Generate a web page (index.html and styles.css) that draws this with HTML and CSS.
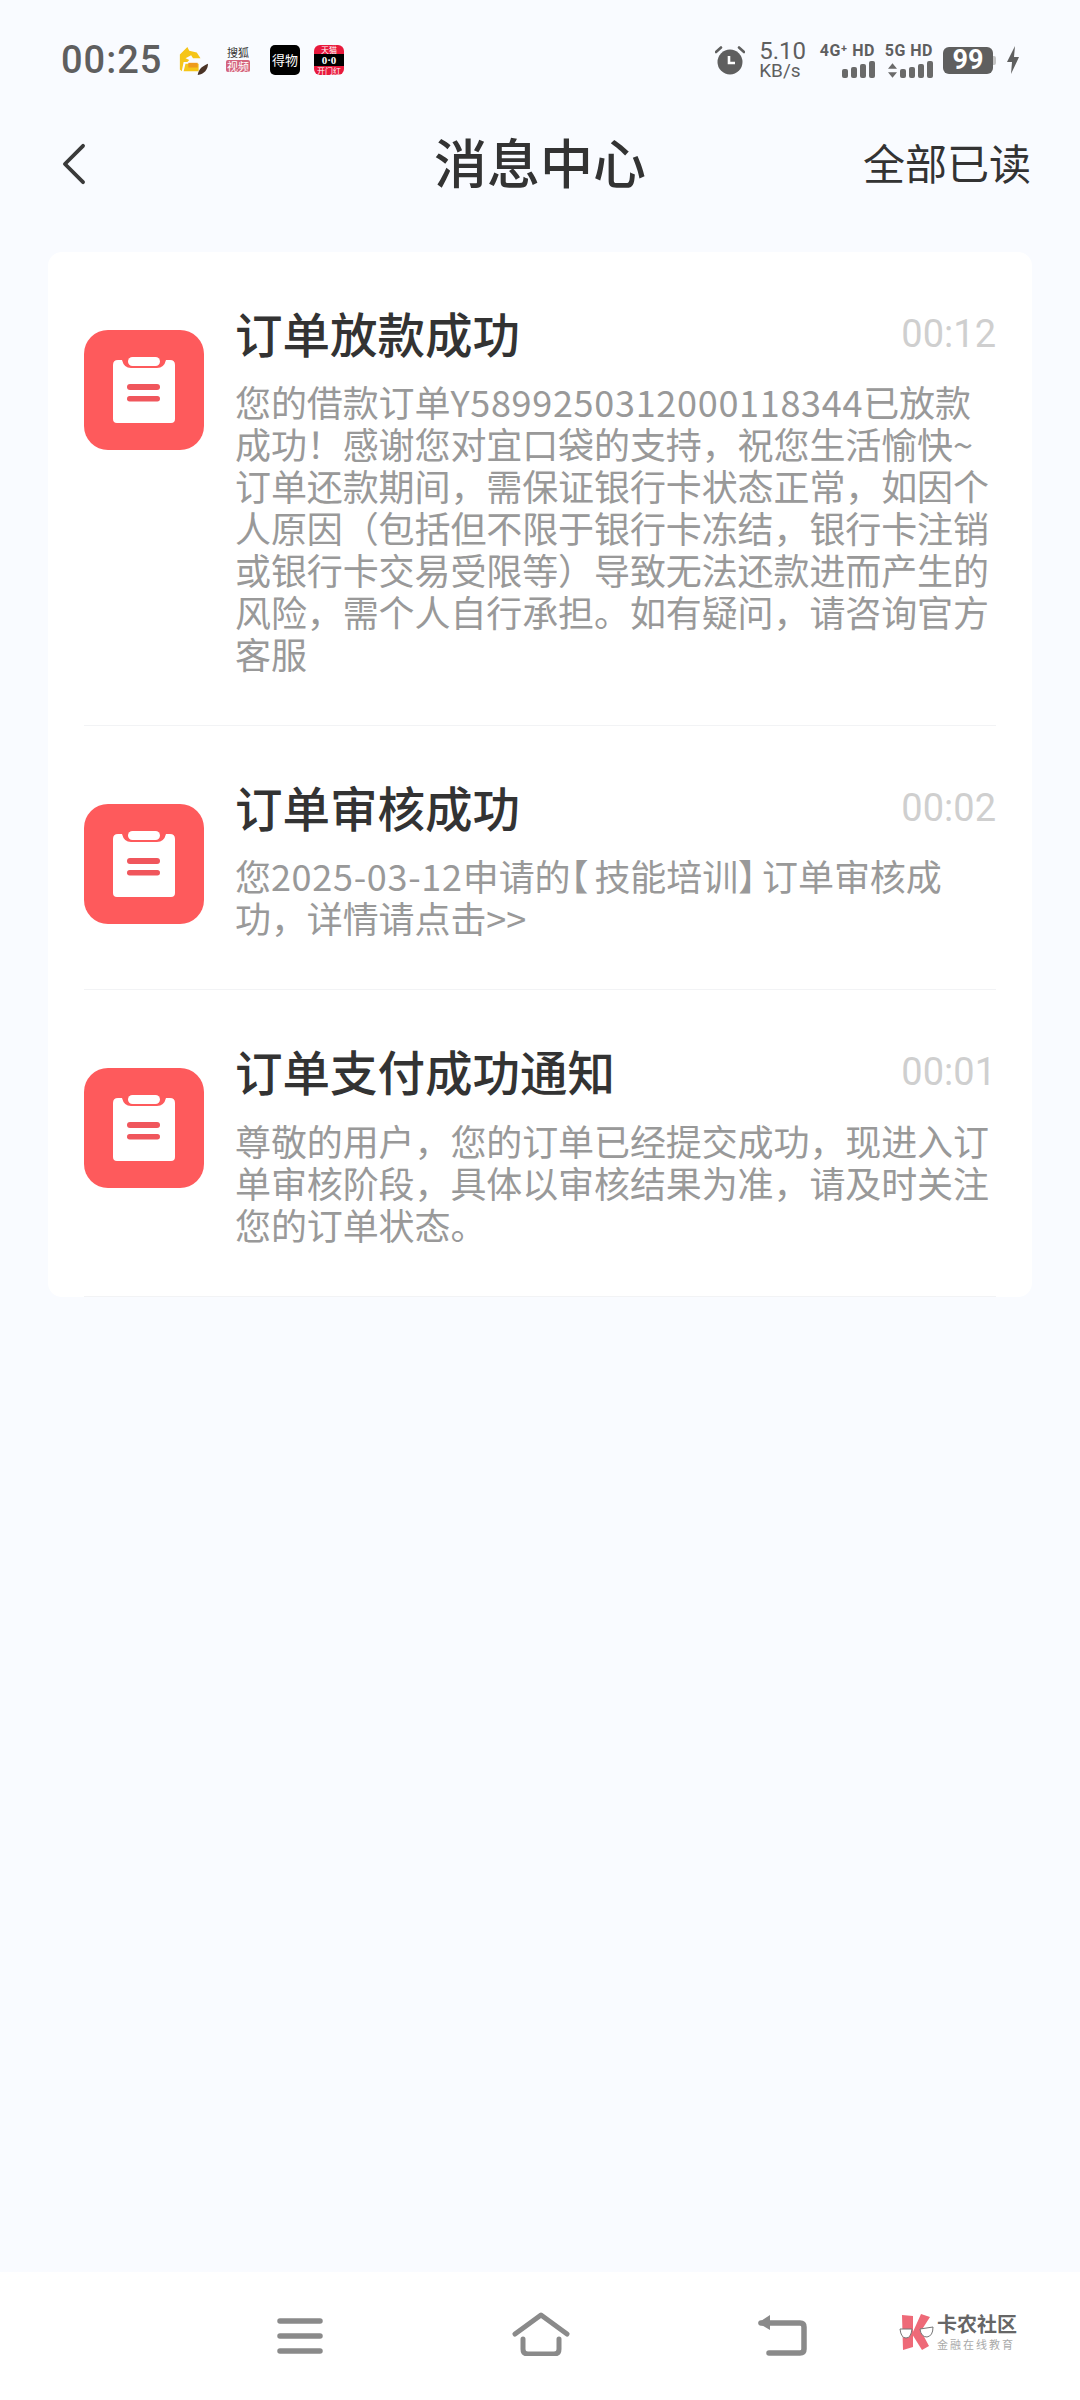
FILE: index.html
```html
<!DOCTYPE html>
<html lang="zh-CN">
<head>
  <meta charset="UTF-8" />
  <meta name="viewport" content="width=device-width, initial-scale=1" />
  <title>消息中心</title>
  <link rel="stylesheet" href="styles.css">
</head>
<body>
  <div class="page">
    <div class="status-bar">
      <span class="clock">00:25</span>
      <svg class="notif n-fox" viewBox="0 0 32 32">
        <path d="M2 10 L10 2 L12 6 L20 8 L24 14 L16 14 L14 11 L8 14 L12 16 L10 18 L6 18 L4 28 L2 26 Z" fill="#f5c518"/>
        <path d="M8 20 H22 V28 H6 Z" fill="#f5c518"/>
        <rect x="11" y="19" width="10" height="5" fill="#ee9a1c"/>
        <path d="M21 32 C22 25 27 22 32 20 C32 26 28 31 21 32 Z" fill="#4a3326"/>
      </svg>
      <div class="notif n-sohu">
        <span class="sohu-top">搜狐</span>
        <span class="sohu-bottom">视频</span>
      </div>
      <div class="notif n-dewu">得物</div>
      <div class="notif n-tmall">
        <span class="tm-top">天猫</span>
        <span class="tm-eyes">0·0</span>
        <span class="tm-bottom">开门红</span>
      </div>

      <div class="status-right">
        <svg class="alarm" viewBox="0 0 30 30">
          <circle cx="15" cy="17" r="12.5" fill="#5f5f5f"/>
          <path d="M14 11 V18 H20" fill="none" stroke="#fff" stroke-width="2.6"/>
          <path d="M1 7 L6 2.5 M29 7 L24 2.5" stroke="#5f5f5f" stroke-width="2.6" stroke-linecap="round"/>
        </svg>
        <div class="speed">
          <span class="speed-num">5.10</span>
          <span class="speed-unit">KB/s</span>
        </div>
        <div class="net net-4g">
          <span class="net-label">4G⁺ HD</span>
          <div class="bars">
            <i class="b1"></i><i class="b2"></i><i class="b3"></i><i class="b4"></i>
          </div>
        </div>
        <div class="net net-5g">
          <span class="net-label">5G HD</span>
          <div class="bars">
            <svg class="updown" viewBox="0 0 10 16"><path d="M5 0 L10 6 H0 Z M5 16 L0 10 H10 Z" fill="#6a6a6a"/></svg>
            <i class="b1"></i><i class="b2"></i><i class="b3"></i><i class="b4"></i>
          </div>
        </div>
        <div class="battery"><span class="battery-body">99</span><span class="battery-tip"></span></div>
        <svg class="bolt" viewBox="0 0 14 28">
          <path d="M9 0 L1 16 H6 L5 28 L13 11 H8 Z" fill="#5f5f5f"/>
        </svg>
      </div>
    </div>

    <header class="top-bar">
      <svg class="back" viewBox="0 0 26 44">
        <path d="M23 3 L4 22 L23 41" fill="none" stroke="#3a3a3a" stroke-width="4" stroke-linecap="round" stroke-linejoin="round"/>
      </svg>
      <h1>消息中心</h1>
      <span class="read-all">全部已读</span>
    </header>

    <main class="card">
      <div class="msg">
        <div class="msg-icon">
          <svg viewBox="0 0 120 120"><use href="#clip"/></svg>
        </div>
        <div class="msg-body">
          <div class="msg-head">
            <h4>订单放款成功</h4>
            <span class="time">00:12</span>
          </div>
          <p>您的借款订单<span class="digits">Y5899250312000118344</span>已放款<br>成功！感谢您对宜口袋的支持，祝您生活愉快~<br>订单还款期间，需保证银行卡状态正常，如因个<br>人原因（包括但不限于银行卡冻结，银行卡注销<br>或银行卡交易受限等）导致无法还款进而产生的<br>风险，需个人自行承担。如有疑问，请咨询官方<br>客服</p>
        </div>
      </div>

      <div class="msg">
        <div class="msg-icon">
          <svg viewBox="0 0 120 120"><use href="#clip"/></svg>
        </div>
        <div class="msg-body">
          <div class="msg-head">
            <h4>订单审核成功</h4>
            <span class="time">00:02</span>
          </div>
          <p>您<span class="digits">2025-03-12</span>申请的<span class="bracket">【</span>技能培训<span class="bracket">】</span>订单审核成<br>功，详情请点击&gt;&gt;</p>
        </div>
      </div>

      <div class="msg">
        <div class="msg-icon">
          <svg viewBox="0 0 120 120"><use href="#clip"/></svg>
        </div>
        <div class="msg-body">
          <div class="msg-head">
            <h4>订单支付成功通知</h4>
            <span class="time">00:01</span>
          </div>
          <p>尊敬的用户，您的订单已经提交成功，现进入订<br>单审核阶段，具体以审核结果为准，请及时关注<br>您的订单状态。</p>
        </div>
      </div>
    </main>

    <nav class="nav-bar">
      <svg class="nav-menu" viewBox="0 0 46 36">
        <path d="M3 3 H43 M3 18 H43 M3 33 H43" stroke="#8a8a8a" stroke-width="5.5" stroke-linecap="round"/>
      </svg>
      <svg class="nav-home" viewBox="0 0 58 44">
        <path d="M3 22 L29 3 L55 22" fill="none" stroke="#8a8a8a" stroke-width="5" stroke-linecap="round" stroke-linejoin="round"/>
        <path d="M11 27 V37 Q11 42 16 42 H42 Q47 42 47 37 V27" fill="none" stroke="#8a8a8a" stroke-width="5" stroke-linecap="round"/>
      </svg>
      <svg class="nav-back" viewBox="0 0 50 42">
        <path d="M4 9 H43 Q47 9 47 13 V35 Q47 39 43 39 H12" fill="none" stroke="#8a8a8a" stroke-width="5.5" stroke-linecap="round"/>
        <path d="M1 9 L13 1 V16 Z" fill="#8a8a8a"/>
      </svg>
      <div class="watermark">
        <svg class="wm-logo" viewBox="0 0 36 36">
          <path d="M3 1 L14 2 L14 33 L4 36 Z" fill="#ee6a78"/>
          <path d="M22 0 L31 3 L22 17 L30 32 L23 36 L13 20 Z" fill="#ee6a78"/>
          <path d="M1 15 L13 15 Q12 24 7 24 Q2 24 1 15 Z" fill="#fff" stroke="#777" stroke-width="1"/>
          <path d="M21 15 L34 13 Q34 22 28 23 Q22 23 21 15 Z" fill="#fff" stroke="#777" stroke-width="1"/>
        </svg>
        <div class="wm-text">
          <span class="wm-title">卡农社区</span>
          <span class="wm-sub">金融在线教育</span>
        </div>
      </div>
    </nav>
  </div>

  <svg class="defs" width="0" height="0">
    <defs>
      <g id="clip">
        <path d="M29 35 Q29 30 34 30 H38 Q40 38 47 38 H73 Q80 38 82 30 H86 Q91 30 91 35 V89 Q91 93 87 93 H33 Q29 93 29 89 Z" fill="#fff"/>
        <rect x="44" y="27" width="32" height="9" rx="4.5" fill="#fff"/>
        <rect x="43" y="54" width="33" height="6" rx="3" fill="#f0565c"/>
        <rect x="43" y="66" width="33" height="5.5" rx="2.7" fill="#f0565c"/>
      </g>
    </defs>
  </svg>
</body>
</html>
```

FILE: styles.css
```css
* {
  box-sizing: border-box;
}
body {
  margin: 0;
  background: #f9fbff;
  font-family: "Noto Sans CJK SC", "Noto Sans", sans-serif;
}
.page {
  display: flex;
  flex-direction: column;
  height: 2400px;
}
.defs {
  position: absolute;
}

/* status bar */
.status-bar {
  display: flex;
  align-items: center;
  height: 120px;
  padding: 0 60px 0 61px;
  color: #5f5f5f;
}
.clock {
  font-family: Roboto, sans-serif;
  font-size: 38px;
  font-weight: 500;
  letter-spacing: 1px;
  width: 117px;
}
.notif {
  width: 30px;
  height: 30px;
  flex: none;
}
.n-fox {
  margin-right: 18px;
}
.n-sohu {
  display: flex;
  flex-direction: column;
  align-items: center;
  width: 24px;
  margin-right: 20px;
  line-height: 1;
}
.sohu-top {
  font-size: 11px;
  line-height: 15px;
  color: #333;
  white-space: nowrap;
}
.sohu-bottom {
  font-size: 11px;
  line-height: 12px;
  color: #fff;
  background: #d4647c;
  border-radius: 2px;
  width: 24px;
  text-align: center;
  white-space: nowrap;
}
.n-dewu {
  background: #000;
  color: #fff;
  border-radius: 5px;
  font-size: 13px;
  line-height: 30px;
  text-align: center;
  margin-right: 14px;
}
.n-tmall {
  display: flex;
  flex-direction: column;
  align-items: center;
  background: #e8193c;
  border-radius: 6px;
  overflow: hidden;
  color: #fff;
  line-height: 9px;
}
.tm-top {
  font-size: 8px;
  height: 9px;
}
.tm-eyes {
  width: 100%;
  height: 12px;
  background: #000;
  font-family: "Liberation Serif", serif;
  font-size: 11px;
  font-weight: 700;
  line-height: 12px;
  text-align: center;
}
.tm-bottom {
  font-size: 8px;
  height: 9px;
}
.status-right {
  display: flex;
  align-items: center;
  margin-left: auto;
}
.alarm {
  width: 30px;
  height: 30px;
  margin-right: 14px;
}
.speed {
  display: flex;
  flex-direction: column;
  font-family: Roboto, sans-serif;
  line-height: 1;
  margin-right: 13px;
}
.speed-num {
  font-size: 24px;
  line-height: 21px;
}
.speed-unit {
  font-size: 19px;
  line-height: 18px;
}
.net {
  display: flex;
  flex-direction: column;
  align-items: flex-end;
  margin-right: 10px;
}
.net-4g {
  width: 56px;
}
.net-5g {
  width: 48px;
}
.net-label {
  font-family: Roboto, sans-serif;
  font-size: 16px;
  font-weight: 700;
  letter-spacing: 0.5px;
  line-height: 16px;
  white-space: nowrap;
}
.bars {
  display: flex;
  align-items: flex-end;
  gap: 3px;
  height: 17px;
  margin-top: 2px;
}
.bars i {
  width: 6px;
  background: #6a6a6a;
  border-radius: 2px;
}
.b1 { height: 9px; }
.b2 { height: 11px; }
.b3 { height: 14px; }
.b4 { height: 17px; }
.updown {
  width: 9px;
  height: 15px;
}
.battery {
  display: flex;
  align-items: center;
  margin-right: 10px;
}
.battery-body {
  width: 50px;
  height: 27px;
  background: #5f5f5f;
  border-radius: 6px;
  color: #fff;
  font-family: Roboto, sans-serif;
  font-size: 27px;
  font-weight: 700;
  line-height: 27px;
  text-align: center;
}
.battery-tip {
  width: 3px;
  height: 9px;
  background: #c4c4c4;
  border-radius: 0 2px 2px 0;
}
.bolt {
  width: 14px;
  height: 28px;
}

/* top bar */
.top-bar {
  position: relative;
  display: flex;
  align-items: center;
  justify-content: space-between;
  height: 90px;
  padding: 0 49px 0 61px;
  color: #333;
}
.back {
  width: 25px;
  height: 42px;
  margin-bottom: 2px;
}
.top-bar h1 {
  position: absolute;
  top: 0;
  left: 0;
  right: 0;
  margin: 0;
  text-align: center;
  font-size: 53px;
  font-weight: 500;
  line-height: 82px;
  pointer-events: none;
}
.read-all {
  font-size: 42px;
  margin-bottom: 8px;
}

/* message list */
.card {
  margin: 42px 48px 0;
  padding: 0 36px;
  background: #fff;
  border-radius: 14px;
}
.msg {
  display: flex;
  align-items: flex-start;
  gap: 31px;
  padding: 54px 0 51px;
  border-bottom: 1px solid #f2f3f5;
}
.msg:last-child {
  padding-bottom: 51px;
}
.msg-icon {
  flex: none;
  width: 120px;
  height: 120px;
  margin-top: 24px;
  background: #fe5a5c;
  border-radius: 24px;
}
.msg-icon svg {
  display: block;
  width: 120px;
  height: 120px;
}
.msg-body {
  flex: 1;
  min-width: 0;
}
.msg-head {
  display: flex;
  justify-content: space-between;
  align-items: center;
  height: 56px;
  margin-bottom: 18px;
}
.msg-head h4 {
  margin: 0 0 3px;
  font-size: 47.5px;
  font-weight: 500;
  color: #333;
  line-height: 56px;
}
.msg:last-child .msg-head {
  margin-bottom: 19px;
}
.time {
  font-family: Roboto, sans-serif;
  font-size: 38px;
  color: #cfcfcf;
}
.msg-body p {
  margin: 0;
  font-size: 36px;
  letter-spacing: -0.1px;
  line-height: 42px;
  color: #999;
  white-space: nowrap;
}
.digits {
  letter-spacing: 0.7px;
}
.bracket {
  font-feature-settings: "halt";
  letter-spacing: 6px;
}

/* bottom nav */
.nav-bar {
  display: flex;
  align-items: center;
  height: 128px;
  margin-top: auto;
  padding: 0 0 0 277px;
  background: #fff;
}
.nav-menu {
  width: 46px;
  height: 36px;
}
.nav-home {
  width: 58px;
  height: 44px;
  margin: 0 0 4px 189px;
}
.nav-back {
  width: 50px;
  height: 42px;
  margin: 0 0 3px 187px;
}
.watermark {
  display: flex;
  align-items: center;
  margin: 0 0 8px 92px;
}
.wm-logo {
  width: 36px;
  height: 36px;
  margin-right: 2px;
}
.wm-text {
  display: flex;
  flex-direction: column;
  gap: 4px;
}
.wm-title {
  font-size: 20px;
  line-height: 20px;
  font-weight: 700;
  color: #666;
}
.wm-sub {
  font-size: 11px;
  line-height: 12px;
  letter-spacing: 2px;
  color: #aaa;
}
```
